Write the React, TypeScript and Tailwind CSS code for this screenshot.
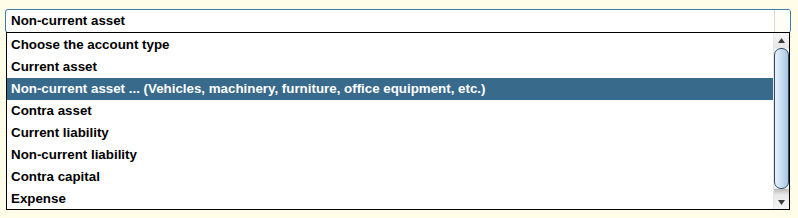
import React from 'react';

const options = [
    'Choose the account type',
    'Current asset',
    'Non-current asset ... (Vehicles, machinery, furniture, office equipment, etc.)',
    'Contra asset',
    'Current liability',
    'Non-current liability',
    'Contra capital',
    'Expense',
];

const selectedIndex = 2;

const Arrow: React.FC<{ up?: boolean }> = ({ up }) => (
    <svg width="7" height="5" viewBox="0 0 7 5">
        <path d={up ? 'M3.5 0 L7 5 L0 5 Z' : 'M0 0 L7 0 L3.5 5 Z'} fill="#3a3a3a" />
    </svg>
);

const App: React.FC = () => {
    return (
        <div className="h-[218px] w-[798px] bg-[#fffde8] pl-[5px] pt-[9px] font-['Liberation_Sans',Arial,sans-serif] text-[13.33px] font-bold text-black">
            <div className="flex h-[24px] w-[786px] rounded-[3px] border border-[#3d7bab] bg-white">
                <div className="flex flex-1 items-center pl-[5px] leading-none">Non-current asset</div>
                <div className="w-[16px] rounded-r-[2px] border-l border-[#d9d9d9] bg-[#fffef6]" />
            </div>
            <div className="ml-[1px] -mt-[1px] flex h-[178px] w-[784px] border border-black bg-white">
                <div className="flex flex-1 flex-col pt-[1px]">
                    {options.map((option, index) => (
                        <div
                            key={option}
                            className={
                                index === selectedIndex
                                    ? 'flex h-[22px] shrink-0 items-center bg-[#386a8c] pl-[4px] text-white'
                                    : 'flex h-[22px] shrink-0 items-center pl-[4px]'
                            }
                        >
                            {option}
                        </div>
                    ))}
                </div>
                <div className="flex w-[16px] flex-col border-l border-[#e6e6e6] bg-[#f0f0f0]">
                    <div className="flex h-[15px] items-center justify-center bg-gradient-to-b from-[#f6f6f6] to-[#e6e6e6]">
                        <Arrow up />
                    </div>
                    <div className="h-[141px] rounded-[7px] border border-[#2f4a66] bg-gradient-to-r from-[#eaf2fa] via-[#c8ddf0] to-[#a8c6e2]" />
                    <div className="flex-1 bg-gradient-to-b from-[#b9b9b9] to-[#e8e8e8]" />
                    <div className="flex h-[14px] items-center justify-center bg-gradient-to-b from-[#e8e8e8] to-[#f4f4f4]">
                        <Arrow />
                    </div>
                </div>
            </div>
        </div>
    );
};

export default App;
